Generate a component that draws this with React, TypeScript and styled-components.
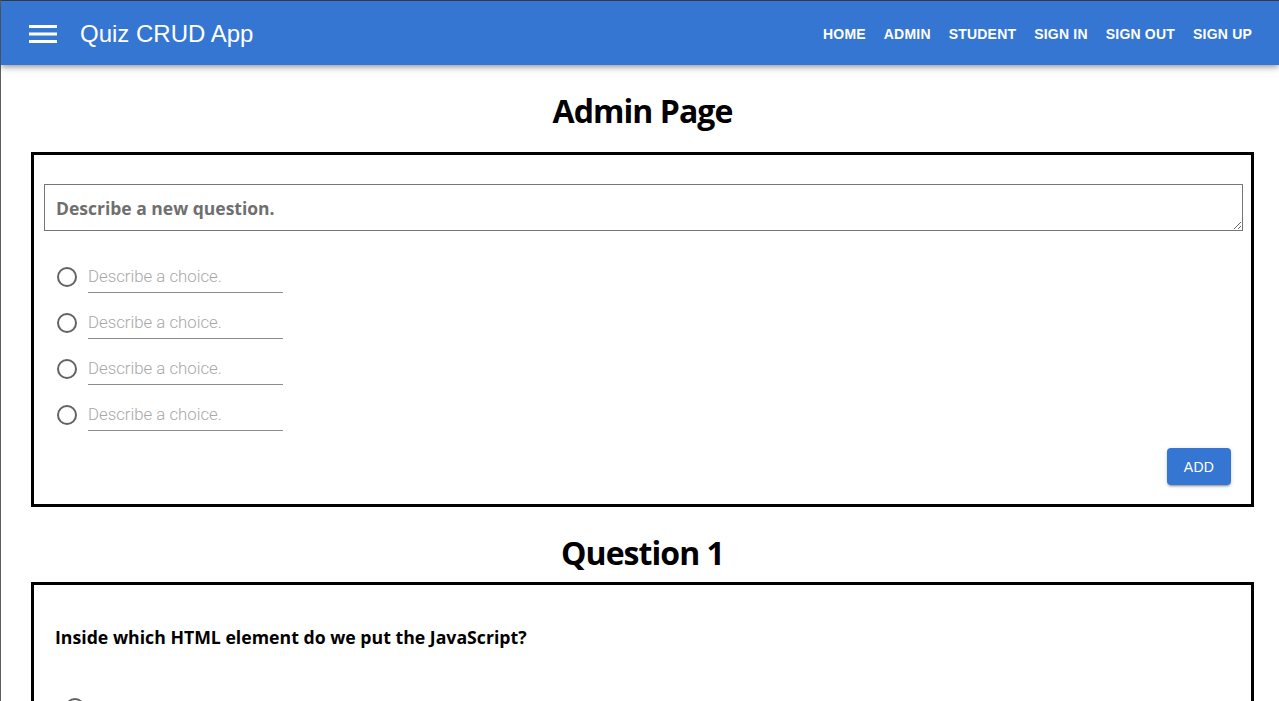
import React from "react";
import styled, { createGlobalStyle } from "styled-components";

const GlobalStyle = createGlobalStyle`
  html, body {
    margin: 0;
    padding: 0;
    background: #fff;
  }
  body {
    font-family: "Open Sans", "Noto Sans", sans-serif;
    overflow: hidden;
  }
  * {
    box-sizing: border-box;
  }
`;

const Frame = styled.div`
  min-height: 100vh;
  border-top: 1px solid #3b3d40;
  border-left: 1px solid #5b6068;
`;

const AppBar = styled.header`
  height: 64px;
  background: #3676d3;
  color: #fff;
  display: flex;
  align-items: center;
  padding: 2px 27px 0 28px;
  position: relative;
  box-shadow: 0 2px 4px -1px rgba(0, 0, 0, 0.2), 0 4px 5px 0 rgba(0, 0, 0, 0.14),
    0 1px 10px 0 rgba(0, 0, 0, 0.12);
`;

const MenuButton = styled.button`
  border: 0;
  background: transparent;
  padding: 0;
  width: 28px;
  height: 20px;
  display: flex;
  color: #fff;
  cursor: pointer;
`;

const Brand = styled.div`
  margin-left: 23px;
  font-family: "Liberation Sans", Arial, sans-serif;
  font-size: 24px;
  line-height: 1;
  flex: 1;
`;

const Nav = styled.nav`
  display: flex;
  align-items: center;
  gap: 18px;
`;

const NavLink = styled.a`
  font-family: "Liberation Sans", Arial, sans-serif;
  font-weight: 700;
  font-size: 14px;
  letter-spacing: 0.2px;
  text-transform: uppercase;
  color: #fff;
  text-decoration: none;
  cursor: pointer;
`;

const Main = styled.main`
  padding: 0 25px 0 30px;
`;

const Heading = styled.h1<{ $top: number; $bottom: number }>`
  margin: ${(p) => p.$top}px 0 ${(p) => p.$bottom}px;
  text-align: center;
  font-family: "Open Sans", sans-serif;
  font-size: 32px;
  font-weight: 700;
  line-height: 38px;
  color: #000;
  letter-spacing: -0.95px;
`;

const Card = styled.section<{ $pad: string }>`
  border: 3px solid #000;
  padding: ${(p) => p.$pad};
  display: flex;
  flex-direction: column;
`;

const QuestionInput = styled.textarea`
  display: block;
  width: 100%;
  height: 47px;
  border: 1px solid #767676;
  border-radius: 0;
  padding: 12px 11px;
  font-family: "Open Sans", sans-serif;
  font-weight: 700;
  font-size: 17.5px;
  line-height: 23px;
  color: #333;
  resize: vertical;
  outline: none;
  &::placeholder {
    color: #6f6f6f;
  }
`;

const ChoiceList = styled.div<{ $top: number }>`
  display: flex;
  flex-direction: column;
  gap: 14px;
  margin-top: ${(p) => p.$top}px;
  padding-left: 13px;
`;

const ChoiceRow = styled.label`
  display: flex;
  align-items: center;
  height: 32px;
`;

const Radio = styled.span`
  width: 20px;
  height: 20px;
  border: 2px solid #636363;
  border-radius: 50%;
  flex: none;
`;

const ChoiceInput = styled.input`
  margin-left: 11px;
  width: 195px;
  height: 32px;
  border: 0;
  border-bottom: 1px solid #8c8c8c;
  padding: 4px 0 6px;
  font-family: Roboto, sans-serif;
  font-weight: 300;
  font-size: 16.8px;
  color: #333;
  outline: none;
  background: transparent;
  &::placeholder {
    color: #a8a8a8;
  }
`;

const AddButton = styled.button`
  align-self: flex-end;
  margin: 17px 12px 0 0;
  width: 64px;
  height: 37px;
  border: 0;
  border-radius: 4px;
  background: #3676d3;
  color: #fff;
  font-family: "Liberation Sans", Arial, sans-serif;
  font-size: 14px;
  letter-spacing: 0.3px;
  cursor: pointer;
  box-shadow: 0 3px 1px -2px rgba(0, 0, 0, 0.2), 0 2px 2px 0 rgba(0, 0, 0, 0.14),
    0 1px 5px 0 rgba(0, 0, 0, 0.12);
`;

const QuestionText = styled.p`
  margin: 0;
  font-family: "Open Sans", sans-serif;
  font-weight: 700;
  font-size: 17.7px;
  line-height: 24px;
  color: #000;
`;

const AnswerList = styled.div`
  display: flex;
  flex-direction: column;
  gap: 14px;
  margin-top: 43px;
  padding-left: 10px;
`;

const MenuIcon = () => (
  <svg width="28" height="20" viewBox="0 0 28 20" fill="currentColor">
    <rect x="0" y="1" width="28" height="3" />
    <rect x="0" y="8.5" width="28" height="3" />
    <rect x="0" y="16" width="28" height="3" />
  </svg>
);

const navItems = ["Home", "Admin", "Student", "Sign In", "Sign Out", "Sign Up"];

const answers = ["<script>", "<javascript>", "<js>", "<scripting>"];

const App = () => {
  return (
    <>
      <GlobalStyle />
      <Frame>
        <AppBar>
          <MenuButton aria-label="menu">
            <MenuIcon />
          </MenuButton>
          <Brand>Quiz CRUD App</Brand>
          <Nav>
            {navItems.map((item) => (
              <NavLink key={item}>{item}</NavLink>
            ))}
          </Nav>
        </AppBar>
        <Main>
          <Heading $top={27} $bottom={22}>
            Admin Page
          </Heading>
          <Card $pad="29px 8px 19px 10px">
            <QuestionInput placeholder="Describe a new question." />
            <ChoiceList $top={30}>
              {[0, 1, 2, 3].map((i) => (
                <ChoiceRow key={i}>
                  <Radio />
                  <ChoiceInput placeholder="Describe a choice." />
                </ChoiceRow>
              ))}
            </ChoiceList>
            <AddButton>ADD</AddButton>
          </Card>
          <Heading $top={27} $bottom={10}>
            Question 1
          </Heading>
          <Card $pad="40px 20px 24px 21px">
            <QuestionText>Inside which HTML element do we put the JavaScript?</QuestionText>
            <AnswerList>
              {answers.map((a) => (
                <ChoiceRow key={a}>
                  <Radio />
                  <ChoiceInput value={a} readOnly />
                </ChoiceRow>
              ))}
            </AnswerList>
          </Card>
        </Main>
      </Frame>
    </>
  );
};

export default App;
